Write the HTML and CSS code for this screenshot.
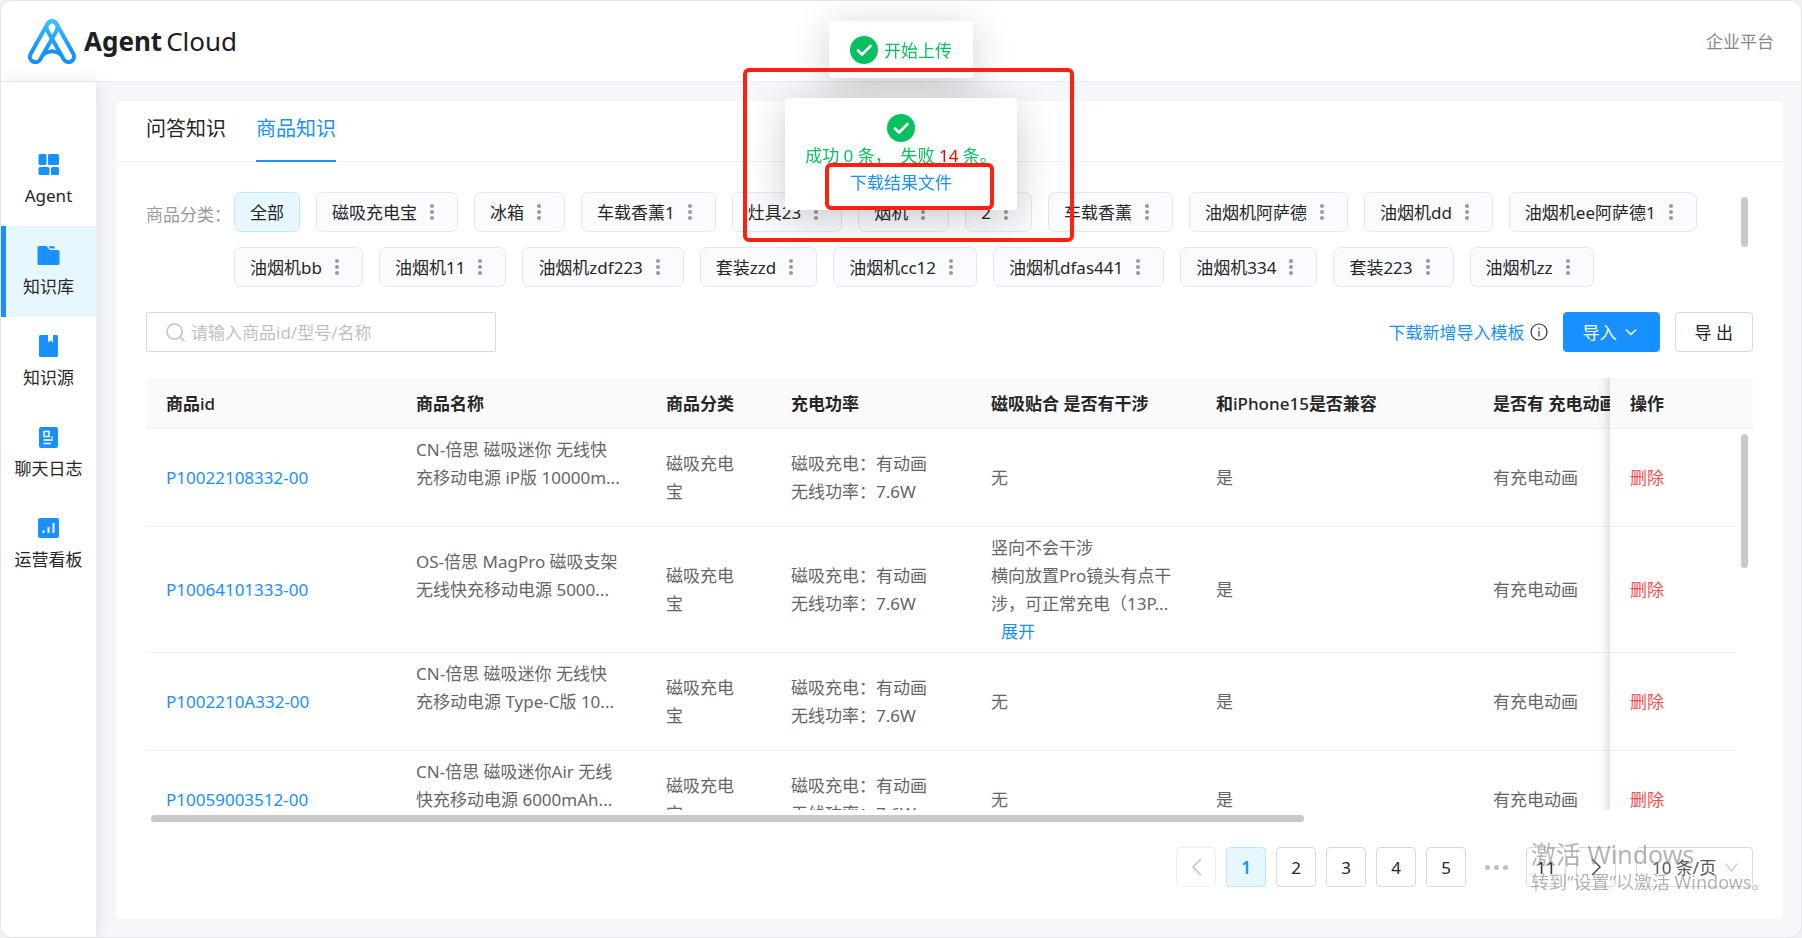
FILE: index.html
```html
<!DOCTYPE html>
<html lang="zh-CN">
<head>
<meta charset="utf-8">
<title>Agent Cloud</title>
<link rel="stylesheet" href="styles.css">
</head>
<body>
<svg class="defs" aria-hidden="true">
  <symbol id="dots" viewBox="0 0 4 18"><circle cx="2" cy="3" r="2"/><circle cx="2" cy="9" r="2"/><circle cx="2" cy="15" r="2"/></symbol>
  <symbol id="success" viewBox="0 0 28 28"><circle cx="14" cy="14" r="14" fill="#07c160"/><path d="M8 14.500l4 4 8.500-8.500" fill="none" stroke="#fff" stroke-width="2.600" stroke-linecap="round" stroke-linejoin="round"/></symbol>
</svg>
<div class="app">
  <header class="header">
    <div class="brand">
      <svg class="logo" viewBox="0 -1 48 46" aria-hidden="true">
        <defs><linearGradient id="lg" x1="0" y1="0" x2="0" y2="46" gradientUnits="userSpaceOnUse"><stop offset="0" stop-color="#36c5ff"/><stop offset=".7" stop-color="#1890ff"/></linearGradient></defs>
        <g fill="none" stroke="url(#lg)" stroke-width="4" stroke-linejoin="round">
          <path d="M19.300 5.200A5.300 5.300 0 0 1 28.700 5.200L45.200 34.500A5.400 5.400 0 0 1 35.800 40.500L19.300 11.500A6 6 0 0 1 19.300 5.200Z"/>
          <path d="M28.700 5.200A5.300 5.300 0 0 0 19.300 5.200L2.800 34.500A5.400 5.400 0 0 0 12.200 40.500L28.700 11.500A6 6 0 0 0 28.700 5.200Z"/>
          <path d="M15 35.500Q24 29 33 35.500"/>
        </g>
      </svg>
      <span class="brand-name"><b>Agent</b><span>Cloud</span></span>
    </div>
    <a class="platform" href="#">企业平台</a>
  </header>
  <div class="body">
    <nav class="sidebar">
      <a class="nav-item" href="#">
        <svg viewBox="0 0 24 24"><rect x="1.500" y="1" width="8" height="11" rx="1.500"/><rect x="11" y="1" width="11" height="11" rx="1.500"/><rect x="1.500" y="14" width="11" height="8" rx="1.500"/><rect x="14" y="14" width="8" height="8" rx="1.500"/></svg>
        <span>Agent</span>
      </a>
      <a class="nav-item active" href="#">
        <svg viewBox="0 0 24 24"><path d="M2 2h7.500l3.500 4h8a1.500 1.500 0 0 1 1.500 1.500v12a1.500 1.500 0 0 1-1.500 1.500H2a1.500 1.500 0 0 1-1.500-1.500v-16A1.500 1.500 0 0 1 2 2z"/><path d="M11.500 2.200h5.500l1.300 2.300h-4.800z"/></svg>
        <span>知识库</span>
      </a>
      <a class="nav-item" href="#">
        <svg viewBox="0 0 24 24"><path d="M3.500 0H11v7.500l2.500-2 2.500 2V0h3.500A1.500 1.500 0 0 1 21 1.500v19a1.500 1.500 0 0 1-1.500 1.500h-16A1.500 1.500 0 0 1 2 20.500v-19A1.500 1.500 0 0 1 3.500 0z"/></svg>
        <span>知识源</span>
      </a>
      <a class="nav-item" href="#">
        <svg viewBox="0 0 24 24"><rect x="2" y="1" width="19" height="21" rx="2"/><path d="M7 5.500h5v5H7zM6.500 14h9.500M6.500 17.500h7.500M14 11.500h2" fill="none" stroke="#fff" stroke-width="1.500"/></svg>
        <span>聊天日志</span>
      </a>
      <a class="nav-item" href="#">
        <svg viewBox="0 0 24 24"><rect x="1" y="1" width="21" height="20" rx="2"/><path d="M6.500 16v-2.500M11.500 16v-6M16.500 16V6" fill="none" stroke="#fff" stroke-width="2"/></svg>
        <span>运营看板</span>
      </a>
    </nav>
    <main class="card">
      <div class="tabs" role="tablist">
        <button class="tab" role="tab">问答知识</button>
        <button class="tab selected" role="tab" aria-selected="true">商品知识</button>
      </div>
      <div class="content">
        <section class="filter">
          <span class="filter-label">商品分类：</span>
          <div class="chips">
            <button class="chip on">全部</button>
            <button class="chip">磁吸充电宝<svg><use href="#dots"/></svg></button>
            <button class="chip">冰箱<svg><use href="#dots"/></svg></button>
            <button class="chip">车载香薰1<svg><use href="#dots"/></svg></button>
            <button class="chip">灶具23<svg><use href="#dots"/></svg></button>
            <button class="chip">烟机<svg><use href="#dots"/></svg></button>
            <button class="chip">2<svg><use href="#dots"/></svg></button>
            <button class="chip">车载香薰<svg><use href="#dots"/></svg></button>
            <button class="chip">油烟机阿萨德<svg><use href="#dots"/></svg></button>
            <button class="chip">油烟机dd<svg><use href="#dots"/></svg></button>
            <button class="chip">油烟机ee阿萨德1<svg><use href="#dots"/></svg></button>
            <button class="chip">油烟机bb<svg><use href="#dots"/></svg></button>
            <button class="chip">油烟机11<svg><use href="#dots"/></svg></button>
            <button class="chip">油烟机zdf223<svg><use href="#dots"/></svg></button>
            <button class="chip">套装zzd<svg><use href="#dots"/></svg></button>
            <button class="chip">油烟机cc12<svg><use href="#dots"/></svg></button>
            <button class="chip">油烟机dfas441<svg><use href="#dots"/></svg></button>
            <button class="chip">油烟机334<svg><use href="#dots"/></svg></button>
            <button class="chip">套装223<svg><use href="#dots"/></svg></button>
            <button class="chip">油烟机zz<svg><use href="#dots"/></svg></button>
          </div>
          <div class="gutter"><i class="thumb short"></i></div>
        </section>
        <section class="toolbar">
          <label class="search">
            <svg viewBox="0 0 20 20" aria-hidden="true"><circle cx="9" cy="9" r="8"/><path d="M14.500 14.500l5 5"/></svg>
            <input type="text" placeholder="请输入商品id/型号/名称" aria-label="请输入商品id/型号/名称">
          </label>
          <div class="actions">
            <a class="link template" href="#">下载新增导入模板</a>
            <svg class="info" viewBox="0 0 18 18" aria-hidden="true"><circle cx="9" cy="9" r="8"/><path d="M9 7.500v6M9 4.500v1.500"/></svg>
            <button class="btn primary">导入<svg viewBox="0 0 12 12"><path d="M1 3.500l5 5 5-5"/></svg></button>
            <button class="btn">导 出</button>
          </div>
        </section>
        <section class="grid">
          <div class="viewport">
            <table>
              <colgroup><col class="c-id"><col class="c-name"><col class="c-cat"><col class="c-power"><col class="c-mag"><col class="c-phone"><col class="c-anim"><col class="c-op"></colgroup>
              <thead>
                <tr><th>商品<span>id</span></th><th>商品名称</th><th>商品分类</th><th>充电功率</th><th>磁吸贴合 是否有干涉</th><th>和<span>iPhone15</span>是否兼容</th><th>是否有 充电动画</th><th class="fixed">操作</th></tr>
              </thead>
              <tbody>
                <tr><td><a class="link" href="#">P10022108332-00</a></td><td><div class="name">CN-倍思 磁吸迷你 无线快<br>充移动电源 iP版 10000m...</div></td><td>磁吸充电宝</td><td>磁吸充电：有动画<br>无线功率：7.6W</td><td>无</td><td>是</td><td>有充电动画</td><td class="fixed"><a class="danger" href="#">删除</a></td></tr>
                <tr><td><a class="link" href="#">P10064101333-00</a></td><td><div class="name">OS-倍思 MagPro 磁吸支架<br>无线快充移动电源 5000...</div></td><td>磁吸充电宝</td><td>磁吸充电：有动画<br>无线功率：7.6W</td><td>竖向不会干涉<br>横向放置Pro镜头有点干<br>涉，可正常充电（13P...<br><a class="link more" href="#">展开</a></td><td>是</td><td>有充电动画</td><td class="fixed"><a class="danger" href="#">删除</a></td></tr>
                <tr><td><a class="link" href="#">P1002210A332-00</a></td><td><div class="name">CN-倍思 磁吸迷你 无线快<br>充移动电源 Type-C版 10...</div></td><td>磁吸充电宝</td><td>磁吸充电：有动画<br>无线功率：7.6W</td><td>无</td><td>是</td><td>有充电动画</td><td class="fixed"><a class="danger" href="#">删除</a></td></tr>
                <tr><td><a class="link" href="#">P10059003512-00</a></td><td><div class="name">CN-倍思 磁吸迷你Air 无线<br>快充移动电源 6000mAh...</div></td><td>磁吸充电宝</td><td>磁吸充电：有动画<br>无线功率：7.6W</td><td>无</td><td>是</td><td>有充电动画</td><td class="fixed"><a class="danger" href="#">删除</a></td></tr>
              </tbody>
            </table>
          </div>
          <div class="rail"><i class="thumb"></i></div>
        </section>
        <div class="hscroll"><i></i></div>
        <nav class="pager">
          <button class="page disabled" disabled aria-label="上一页"><svg viewBox="0 0 12 20"><path d="M11 1L2 10l9 9"/></svg></button>
          <button class="page current">1</button>
          <button class="page">2</button>
          <button class="page">3</button>
          <button class="page">4</button>
          <button class="page">5</button>
          <span class="ellipsis"><i></i><i></i><i></i></span>
          <button class="page">11</button>
          <button class="page" aria-label="下一页"><svg viewBox="0 0 12 20"><path d="M1 1l9 9-9 9"/></svg></button>
          <label class="size"><select aria-label="每页条数"><option>10 条/页</option></select><svg viewBox="0 0 14 14" aria-hidden="true"><path d="M1 3l6 8 6-8"/></svg></label>
        </nav>
      </div>
    </main>
  </div>
</div>
<div class="toasts">
  <div class="toast" role="status"><svg><use href="#success"/></svg><span>开始上传</span></div>
  <div class="toast result" role="status">
    <svg><use href="#success"/></svg>
    <span>成功 0 条，&nbsp; 失败 <em>14</em> 条。</span>
    <a class="link" href="#">下载结果文件</a>
  </div>
</div>
<div class="mark outer"></div>
<div class="mark inner"></div>
<div class="watermark"><p class="wm-title">激活 Windows</p><p>转到“设置”以激活 Windows。</p></div>
</body>
</html>
```

FILE: styles.css
```css
* { box-sizing: border-box; }
body {
  margin: 0;
  background: #f0f0f0;
  color: #262626;
  font: 17px/27px "Noto Sans", "Noto Sans CJK SC", sans-serif;
}
button, input, select { font: inherit; color: inherit; }
button { cursor: pointer; }
a { text-decoration: none; color: inherit; }
p { margin: 0; }
.defs { position: absolute; width: 0; height: 0; }
.link { color: #1890ff; }
.danger { color: #ff4d4f; }

.app {
  height: 100vh;
  display: flex;
  flex-direction: column;
  overflow: hidden;
  background: #f6f7fa;
  border: 1px solid #e4e4e4;
  border-radius: 12px;
}
.header {
  flex: none;
  height: 81px;
  padding: 0 27px;
  display: flex;
  align-items: center;
  justify-content: space-between;
  background: #fff;
  border-bottom: 1px solid #ebedf0;
}
.brand { display: flex; align-items: center; gap: 8px; }
.logo { width: 48px; height: 46px; overflow: visible; }
.brand-name { display: flex; gap: 4px; font-size: 26px; line-height: 36px; color: #1a2027; }
.platform { color: #86888f; }

.body { flex: 1; min-height: 0; display: flex; }
.sidebar {
  flex: none;
  width: 95px;
  padding-top: 53px;
  background: #fff;
  box-shadow: 2px 0 16px rgba(30, 40, 80, .1);
}
.nav-item {
  height: 91px;
  padding-top: 18px;
  display: flex;
  flex-direction: column;
  align-items: center;
  gap: 5px;
}
.nav-item svg { flex: none; width: 24px; height: 24px; fill: #1890ff; }
.nav-item.active { background: #e6f7ff; box-shadow: inset 5px 0 #1890ff; }

.card {
  flex: 1;
  min-width: 0;
  margin: 19px 18px 18px 20px;
  display: flex;
  flex-direction: column;
  background: #fff;
  border-radius: 5px;
}
.tabs {
  flex: none;
  height: 61px;
  padding: 0 30px;
  display: flex;
  gap: 30px;
  border-bottom: 1px solid #f0f0f0;
}
.tab {
  height: 61px;
  padding: 0 0 6px;
  border: 0;
  background: none;
  font-size: 20px;
}
.tab.selected { color: #1890ff; box-shadow: inset 0 -2px #1890ff; }

.content {
  flex: 1;
  min-height: 0;
  padding: 30px 30px 32px;
  display: flex;
  flex-direction: column;
}
.filter { display: flex; flex: none; }
.filter-label { width: 88px; padding-top: 9px; color: #999; white-space: nowrap; }
.chips { flex: 1; display: flex; flex-wrap: wrap; gap: 15px 16px; }
.chip {
  height: 40px;
  padding: 0 23px 0 15px;
  display: flex;
  align-items: center;
  gap: 13px;
  white-space: nowrap;
  background: #fafbfe;
  border: 1px solid #e4e6ee;
  border-radius: 7px;
}
.chip svg { width: 4px; height: 18px; fill: #999; }
.chip.on { padding: 0 15px; background: #e6f7ff; border-color: #bae7ff; }
.gutter { width: 12px; padding-top: 5px; }
.thumb { display: block; width: 7px; height: 134px; background: #c9c9c9; border-radius: 4px; }
.thumb.short { height: 50px; }

.toolbar {
  flex: none;
  margin: 25px 0 26px;
  display: flex;
  justify-content: space-between;
}
.search {
  width: 350px;
  height: 40px;
  padding: 0 19px;
  display: flex;
  align-items: center;
  gap: 6px;
  border: 1px solid #d9d9d9;
  border-radius: 2px;
}
.search svg { flex: none; width: 19px; height: 19px; fill: none; stroke: #bfbfbf; stroke-width: 1.5; }
.search input { flex: 1; min-width: 0; padding: 0; border: 0; outline: 0; background: none; }
.search input::placeholder { color: #bfbfbf; opacity: 1; }
.actions { display: flex; align-items: center; }
.info { width: 18px; height: 18px; margin: 0 15px 0 5px; fill: none; stroke: #333; stroke-width: 1.2; }
.btn {
  height: 40px;
  padding: 0 19px;
  background: #fff;
  border: 1px solid #d9d9d9;
  border-radius: 4px;
}
.btn.primary {
  margin-right: 15px;
  padding: 0 22px 0 19px;
  display: flex;
  align-items: center;
  gap: 8px;
  color: #fff;
  background: #1890ff;
  border-color: #1890ff;
}
.btn svg { width: 12px; height: 12px; fill: none; stroke: #fff; stroke-width: 1.5; }

.grid {
  flex: 1;
  min-height: 0;
  display: flex;
  background: linear-gradient(#fafafa 50px, #f0f0f0 50px, #f0f0f0 51px, #fff 51px);
}
.viewport { flex: 1; min-width: 0; overflow: hidden; }
.rail { width: 17px; padding: 56px 5px 0; }
table { width: 1703px; table-layout: fixed; border-collapse: separate; border-spacing: 0; }
.c-id, .c-name, .c-anim { width: 250px; }
.c-cat { width: 125px; }
.c-power { width: 200px; }
.c-mag { width: 225px; }
.c-phone { width: 277px; }
.c-op { width: 126px; }
th, td {
  padding: 7px 24px 6px 20px;
  line-height: 28px;
  text-align: left;
  vertical-align: middle;
  border-bottom: 1px solid #f0f0f0;
  background: #fff;
}
th { height: 51px; background: #fafafa; font-weight: 600; white-space: nowrap; }
th span { font-weight: 500; }
td { color: #666; white-space: nowrap; }
td:nth-child(3) { white-space: normal; }
.name { padding-bottom: 28px; }
.more { padding-left: 10px; }
.fixed { position: sticky; right: 0; }
.fixed::before {
  content: "";
  position: absolute;
  top: 0;
  bottom: -1px;
  right: 100%;
  width: 12px;
  background: linear-gradient(to left, rgba(0, 0, 0, .1), rgba(0, 0, 0, .02) 60%, transparent);
}
.hscroll { flex: none; padding: 5px 22px 25px 5px; }
.hscroll i { display: block; width: 73%; height: 7px; background: #c9c9c9; border-radius: 4px; }

.pager { flex: none; display: flex; justify-content: flex-end; gap: 10px; }
.page {
  width: 40px;
  height: 40px;
  padding: 0;
  display: flex;
  align-items: center;
  justify-content: center;
  background: #fff;
  border: 1px solid #d9d9d9;
  border-radius: 4px;
}
.page svg { width: 11px; height: 18px; fill: none; stroke: #444; stroke-width: 1.5; }
.page.disabled { border-color: #ececec; }
.page.disabled svg { stroke: #bfbfbf; }
.page.current { color: #1890ff; font-weight: 600; background: #e6f7ff; border-color: #bae7ff; }
.ellipsis { width: 40px; display: flex; align-items: center; justify-content: center; gap: 4px; }
.ellipsis i { width: 5px; height: 5px; border-radius: 50%; background: #bfbfbf; }
.size {
  width: 117px;
  height: 40px;
  margin-left: 10px;
  padding: 0 14px 0 15px;
  display: flex;
  align-items: center;
  border: 1px solid #d9d9d9;
  border-radius: 4px;
}
.size select { flex: 1; min-width: 0; padding: 0; border: 0; appearance: none; background: none; color: #555; }
.size svg { flex: none; width: 13px; height: 13px; fill: none; stroke: #bfbfbf; stroke-width: 1.2; }

.toasts {
  position: fixed;
  top: 21px;
  left: 0;
  right: 0;
  display: flex;
  flex-direction: column;
  align-items: center;
  gap: 20px;
  pointer-events: none;
}
.toast {
  padding: 15px 21px 14px;
  display: flex;
  align-items: center;
  gap: 6px;
  color: #07c160;
  background: #fff;
  border-radius: 4px;
  box-shadow: 0 8px 40px rgba(0, 0, 0, .2);
}
.toast svg { width: 28px; height: 28px; }
.toast.result { flex-direction: column; gap: 0; padding: 16px 20px 14px; }
.toast em { font-style: normal; color: #f00; }
.mark { position: absolute; border: 4px solid #ff2010; border-radius: 6px; pointer-events: none; }
.mark.outer { top: 68px; left: calc(50% - 158px); width: 331px; height: 174px; }
.mark.inner { top: 163px; left: calc(50% - 76px); width: 169px; height: 47px; }

.watermark {
  position: fixed;
  right: 36px;
  bottom: 42px;
  width: 235px;
  color: rgba(130, 130, 130, .6);
  font-size: 18px;
  white-space: nowrap;
  pointer-events: none;
}
.wm-title { font-size: 25px; line-height: 30px; }
```
